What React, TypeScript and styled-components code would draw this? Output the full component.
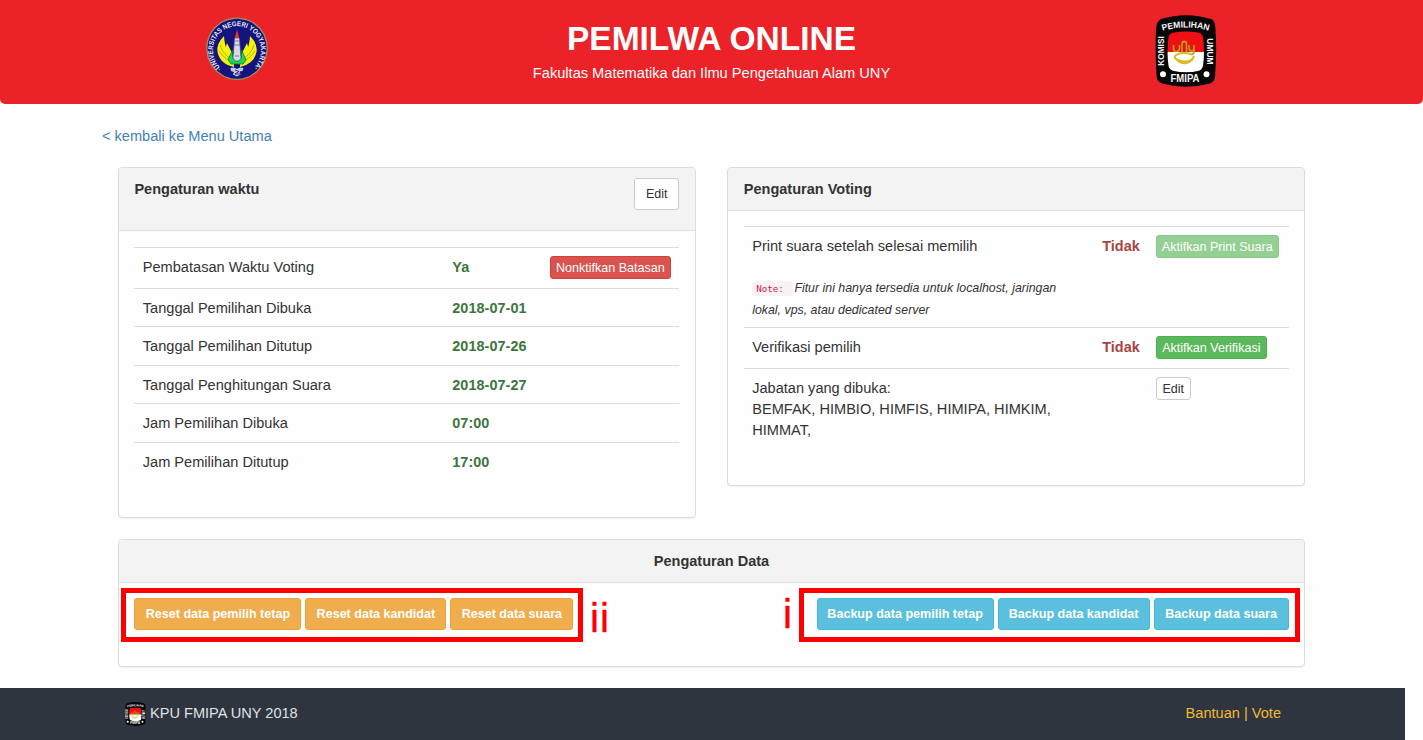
import React from 'react';
import styled, { createGlobalStyle } from 'styled-components';

const Global = createGlobalStyle`
  * { box-sizing: border-box; }
  body {
    margin: 0;
    background: #fefefe;
    color: #333;
    font-family: "Liberation Sans", Arial, sans-serif;
    font-size: 14.58px;
    line-height: 20.7px;
    overflow: hidden;
  }
`;

const Page = styled.div`
  height: 740px;
  display: flex;
  flex-direction: column;
`;

const Header = styled.header`
  flex: none;
  height: 104px;
  display: grid;
  grid-template-columns: 474px 1fr 474px;
  background: #eb2227;
  border-radius: 0 0 5px 5px;
  color: #fff;
`;

const LogoCell = styled.div<{ $top: number }>`
  display: flex;
  justify-content: center;
  align-items: flex-start;
  padding-top: ${(p) => p.$top}px;
`;

const TitleBlock = styled.div`
  text-align: center;
  white-space: nowrap;
`;

const Title = styled.h1`
  margin: 20px 0 0;
  font-size: 33.5px;
  line-height: 37px;
`;

const Subtitle = styled.p`
  margin: 6px 0 0;
  font-size: 14.62px;
`;

const BackLink = styled.a`
  align-self: flex-start;
  height: 20.5px;
  margin: 21.5px 0 0 102px;
  color: #4581b8;
  text-decoration: none;
`;

const Main = styled.main`
  flex: none;
  padding: 21px 118px 0;
  height: 542px;
`;

const Columns = styled.div`
  display: grid;
  grid-template-columns: 577.6px 577.6px;
  justify-content: space-between;
  align-items: start;
`;

const Panel = styled.section<{ $height: number }>`
  height: ${(p) => p.$height}px;
  border: 1px solid #dcdcdc;
  border-radius: 4px;
  background: #fefefe;
  box-shadow: 0 1px 1px rgba(0, 0, 0, 0.05);
`;

const PanelHead = styled.div<{ $height: number; $center?: boolean }>`
  display: flex;
  justify-content: ${(p) => (p.$center ? 'center' : 'space-between')};
  align-items: flex-start;
  height: ${(p) => p.$height}px;
  padding: 10.4px 15.4px 0;
  background: #f3f3f3;
  border-bottom: 1px solid #dfdfdf;
  border-radius: 3px 3px 0 0;
`;

const PanelTitle = styled.h2`
  margin: 0;
  padding-top: 0.8px;
  font-size: 14.52px;
  line-height: 20.6px;
`;

const Table = styled.div<{ $top: number }>`
  margin: ${(p) => p.$top}px 15.4px 0;
`;

const Row = styled.div<{ $height: number; $columns: string }>`
  display: grid;
  grid-template-columns: ${(p) => p.$columns};
  height: ${(p) => p.$height}px;
  border-top: 1px solid #dcdcdc;
  padding-top: 8.4px;
`;

const Cell = styled.div`
  padding: 0.8px 8.4px 0;
  white-space: nowrap;
`;

const ActionCell = styled.div<{ $inset: number }>`
  padding-left: ${(p) => p.$inset}px;
`;

const Value = styled.div<{ $tone: 'good' | 'bad' }>`
  padding: 0.8px 8.4px 0;
  font-size: 14.42px;
  font-weight: bold;
  letter-spacing: 0.06px;
  color: ${(p) => (p.$tone === 'good' ? '#3c763d' : '#a94442')};
`;

const tones = {
  plain: ['#fff', '#ccc', '#333'],
  danger: ['#d9534f', '#d43f3a', '#fff'],
  success: ['#5cb85c', '#4cae4c', '#fff'],
  warning: ['#f0ad4e', '#eea236', '#fff'],
  info: ['#5bc0de', '#46b8da', '#fff'],
};

const Button = styled.button<{ $tone: keyof typeof tones; $size: 'xs' | 'sm'; $width: number }>`
  display: flex;
  align-items: center;
  justify-content: center;
  flex: none;
  width: ${(p) => p.$width}px;
  height: ${(p) => (p.$size === 'xs' ? 23 : 32)}px;
  padding: 0;
  border: 1px solid ${(p) => tones[p.$tone][1]};
  border-radius: 3px;
  background: ${(p) => tones[p.$tone][0]};
  color: ${(p) => tones[p.$tone][2]};
  font-family: inherit;
  font-size: 12.55px;
  line-height: 18px;
  white-space: nowrap;
  &:disabled { opacity: 0.65; }
`;

const DataButton = styled(Button)`
  font-weight: bold;
`;

const Note = styled.em`
  display: block;
  margin-top: 21px;
  font-size: 12.36px;
`;

const NoteTag = styled.code`
  margin-right: 1px;
  padding: 2px 4px;
  border-radius: 4px;
  background: #f9f2f4;
  color: #c7254e;
  font-family: "DejaVu Sans Mono", monospace;
  font-size: 9.2px;
  font-style: normal;
  white-space: pre;
`;

const DataPanel = styled(Panel)`
  margin-top: 21px;
`;

const DataBody = styled.div`
  display: flex;
  justify-content: space-between;
  padding: 15.4px 15.4px 0;
`;

const ButtonGroup = styled.div`
  position: relative;
  display: flex;
  gap: 4px;
`;

const Highlight = styled.div<{ $left: number; $right: number }>`
  position: absolute;
  top: -10.5px;
  bottom: -11.5px;
  left: ${(p) => p.$left}px;
  right: ${(p) => p.$right}px;
  border: 5px solid #fe0000;
  pointer-events: none;
`;

const Marker = styled.span<{ $left: number; $top: number }>`
  position: absolute;
  left: ${(p) => p.$left}px;
  top: ${(p) => p.$top}px;
  color: #fe0000;
  font-size: 40.5px;
  line-height: 40px;
  letter-spacing: 1px;
  -webkit-text-stroke: 0.4px #fe0000;
`;

const Footer = styled.footer`
  flex: 1;
  width: 1405px;
  display: flex;
  justify-content: space-between;
  align-items: flex-start;
  padding: 15px 124px 0 125px;
  background: #2f353f;
  color: #dfe2e5;
`;

const Brand = styled.div`
  display: flex;
  gap: 4px;
  svg { margin-top: -1px; }
`;

const FooterLinks = styled.nav`
  color: #f0b933;
`;

function UniversityLogo() {
  return (
    <svg width="62" height="63" viewBox="0 0 62 63">
      <defs>
        <path id="uny-ring" d="M15.500 51.500A24 24 0 1 1 46.500 51.500" />
      </defs>
      <path
        d="M31 .8 40 2.500 47 5.500 53.500 11 58 17.500 60.700 25 61.200 32 60 40 56.500 48 51 54.500 44 59.500 37 61.800 31 62.300 25 61.800 18 59.500 11 54.500 5.500 48 2 40 .8 32 1.300 25 4 17.500 8.500 11 15 5.500 22 2.500Z"
        fill="#14147c"
        stroke="#a38f55"
        strokeWidth="1.3"
      />
      <g fill="#f2f20a">
        <path d="M18 19Q10 27 11.500 35 14 47 28 50L28 40Q19 36 18 19Z" />
        <path d="M44 19Q52 27 50.500 35 48 47 34 50L34 40Q43 36 44 19Z" />
        <path d="M21 26 28 40 26 44 18 36ZM41 26 34 40 36 44 44 36Z" />
      </g>
      <g fill="none" stroke="#8c8b32" strokeWidth=".6">
        <path d="M14 28Q17 38 26 42M13 34Q18 42 27 45M48 28Q45 38 36 42M49 34Q44 42 35 45" />
      </g>
      <path d="M26.500 33 22 43 25 47H37L40 43 35.500 33V40L33 43H29L26.500 40Z" fill="#19d84a" stroke="#087a32" strokeWidth=".8" />
      <path d="M28.600 21H33.400L35 41 33 44H29L27 41Z" fill="#d9d9e8" stroke="#444487" strokeWidth=".7" />
      <path d="M28.500 24H33.500M28 28H34M29 39H33" stroke="#777796" />
      <path d="M31 12.500 28.800 21H33.200Z" fill="#ef3428" />
      <path d="M24.500 51Q28 49.500 31 52 34 49.500 37.500 51L36.500 54 33.500 54.500 34.500 57.500 31 59.500 27 57.500 28 55 25 54Z" fill="#c8c8e6" />
      <path d="M29 53 33 54.500 29 57H34" fill="none" stroke="#27277f" />
      <text fontFamily="Liberation Sans, sans-serif" fontSize="7" fontWeight="bold" fill="#e8e8f5">
        <textPath href="#uny-ring" textLength="115" lengthAdjust="spacingAndGlyphs">·UNIVERSITAS NEGERI YOGYAKARTA·</textPath>
      </text>
    </svg>
  );
}

function CommissionLogo({ width, height, id }: { width: number; height: number; id: string }) {
  return (
    <svg width={width} height={height} viewBox="0 0 62 71" preserveAspectRatio="none">
      <defs>
        <path id={id + '-top'} d="M6.500 16Q31 8.500 55.500 16" />
        <clipPath id={id + '-clip'}>
          <path d="M18 17.500Q31 14.500 44 17.500 47 18 48 22 50 36 48 50 47 54 44 55 31 58 18 55 14.500 54 13.500 50 11.500 36 13.500 22 14.500 18 18 17.500Z" />
        </clipPath>
      </defs>
      <path d="M6 4Q31-3.500 56 4 60 5 60.500 14 62 36 60 61 59.500 66 55 67.500 31 74 7 67.500 2 66 1.500 60 0 36 1 14 1.500 6 6 4Z" fill="#070707" />
      <g clipPath={'url(#' + id + '-clip)'}>
        <rect x="10" y="14" width="42" height="22.500" fill="#f00f13" />
        <rect x="10" y="36.500" width="42" height="22" fill="#fff" />
      </g>
      <path d="M18.500 29.500V33Q18.500 36 21.500 36 24.500 36 24.500 32.500V29.500M27 36.500V28.500Q27 26 29.300 26 31.500 26 31.500 28.500V36.500M34 29.500V32.500Q34 35.500 36.500 35.500 39 35.500 39 32.500V29.500 36.500Q38.500 39 35.500 39" fill="none" stroke="#b6a21e" strokeWidth="1.600" />
      <path d="M36 38.500Q26 36 21 39.500 18 42 22 44 28 47 35 45 38.500 43 39 40M21 43Q24 47.500 30 47.500 35 47 38 43" fill="none" stroke="#d9bd25" strokeWidth="2" />
      <g fontFamily="Liberation Sans, sans-serif" fontWeight="bold" fill="#f5f5f5">
        <text fontSize="8.6">
          <textPath href={'#' + id + '-top'} textLength="47" lengthAdjust="spacingAndGlyphs" startOffset="1">PEMILIHAN</textPath>
        </text>
        <text fontSize="8.800" textLength="29" lengthAdjust="spacingAndGlyphs" transform="translate(8.500 50) rotate(-90)">KOMISI</text>
        <text fontSize="8.800" textLength="26" lengthAdjust="spacingAndGlyphs" transform="translate(51.500 23) rotate(90)">UMUM</text>
        <text x="15.5" y="66.5" fontSize="10" textLength="29" lengthAdjust="spacingAndGlyphs">FMIPA</text>
      </g>
      <circle cx="8" cy="58.500" r="3" fill="#fff" />
      <circle cx="51.500" cy="58.500" r="3" fill="#fff" />
    </svg>
  );
}

const schedule = [
  ['Tanggal Pemilihan Dibuka', '2018-07-01'],
  ['Tanggal Pemilihan Ditutup', '2018-07-26'],
  ['Tanggal Penghitungan Suara', '2018-07-27'],
  ['Jam Pemilihan Dibuka', '07:00'],
  ['Jam Pemilihan Ditutup', '17:00'],
];

const timeColumns = '309.500px 106px 1fr';
const votingColumns = '350px 54px 1fr';

export default function App() {
  return (
    <Page>
      <Global />
      <Header>
        <LogoCell $top={17}><UniversityLogo /></LogoCell>
        <TitleBlock>
          <Title>PEMILWA ONLINE</Title>
          <Subtitle>Fakultas Matematika dan Ilmu Pengetahuan Alam UNY</Subtitle>
        </TitleBlock>
        <LogoCell $top={15}><CommissionLogo width={62} height={72} id="head" /></LogoCell>
      </Header>
      <BackLink>&lt; kembali ke Menu Utama</BackLink>
      <Main>
        <Columns>
          <Panel $height={351}>
            <PanelHead $height={63}>
              <PanelTitle>Pengaturan waktu</PanelTitle>
              <Button $tone="plain" $size="sm" $width={45}>Edit</Button>
            </PanelHead>
            <Table $top={16}>
              <Row $height={40.8} $columns={timeColumns}>
                <Cell>Pembatasan Waktu Voting</Cell>
                <Value $tone="good">Ya</Value>
                <ActionCell $inset={0}><Button $tone="danger" $size="xs" $width={121}>Nonktifkan Batasan</Button></ActionCell>
              </Row>
              {schedule.map(([label, value]) => (
                <Row key={label} $height={38.5} $columns={timeColumns}>
                  <Cell>{label}</Cell>
                  <Value $tone="good">{value}</Value>
                </Row>
              ))}
            </Table>
          </Panel>
          <Panel $height={319}>
            <PanelHead $height={43}><PanelTitle>Pengaturan Voting</PanelTitle></PanelHead>
            <Table $top={15}>
              <Row $height={101} $columns={votingColumns}>
                <Cell>
                  Print suara setelah selesai memilih
                  <Note>
                    <NoteTag>{'Note: '}</NoteTag>Fitur ini hanya tersedia untuk localhost, jaringan
                    <br />
                    lokal, vps, atau dedicated server
                  </Note>
                </Cell>
                <Value $tone="bad">Tidak</Value>
                <ActionCell $inset={8}><Button $tone="success" $size="xs" $width={123} disabled>Aktifkan Print Suara</Button></ActionCell>
              </Row>
              <Row $height={41} $columns={votingColumns}>
                <Cell>Verifikasi pemilih</Cell>
                <Value $tone="bad">Tidak</Value>
                <ActionCell $inset={8}><Button $tone="success" $size="xs" $width={111}>Aktifkan Verifikasi</Button></ActionCell>
              </Row>
              <Row $height={90} $columns={votingColumns}>
                <Cell>
                  Jabatan yang dibuka:
                  <br />
                  BEMFAK, HIMBIO, HIMFIS, HIMIPA, HIMKIM,
                  <br />
                  HIMMAT,
                </Cell>
                <div />
                <ActionCell $inset={8}><Button $tone="plain" $size="xs" $width={35}>Edit</Button></ActionCell>
              </Row>
            </Table>
          </Panel>
        </Columns>
        <DataPanel $height={128}>
          <PanelHead $height={43} $center><PanelTitle>Pengaturan Data</PanelTitle></PanelHead>
          <DataBody>
            <ButtonGroup>
              <DataButton $tone="warning" $size="sm" $width={167}>Reset data pemilih tetap</DataButton>
              <DataButton $tone="warning" $size="sm" $width={141}>Reset data kandidat</DataButton>
              <DataButton $tone="warning" $size="sm" $width={123}>Reset data suara</DataButton>
              <Highlight $left={-13.4} $right={-9.6} />
              <Marker $left={455.6} $top={0}>ii</Marker>
            </ButtonGroup>
            <ButtonGroup>
              <DataButton $tone="info" $size="sm" $width={177}>Backup data pemilih tetap</DataButton>
              <DataButton $tone="info" $size="sm" $width={152}>Backup data kandidat</DataButton>
              <DataButton $tone="info" $size="sm" $width={135}>Backup data suara</DataButton>
              <Highlight $left={-17.6} $right={-11} />
              <Marker $left={-33.6} $top={-4}>i</Marker>
            </ButtonGroup>
          </DataBody>
        </DataPanel>
      </Main>
      <Footer>
        <Brand>
          <CommissionLogo width={21} height={24} id="foot" />
          KPU FMIPA UNY 2018
        </Brand>
        <FooterLinks>Bantuan | Vote</FooterLinks>
      </Footer>
    </Page>
  );
}
